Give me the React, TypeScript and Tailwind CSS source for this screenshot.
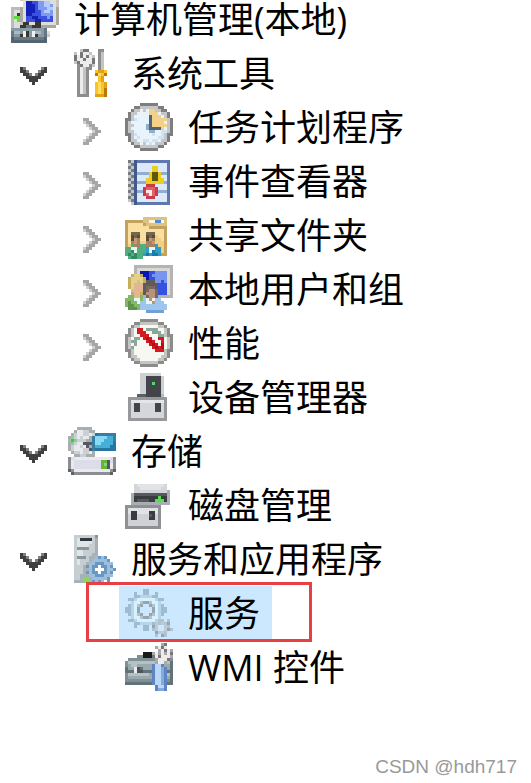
import React, { useState } from "react";

type Sprite = { colors: Record<string, string>; rows: string[] };

// 16x16 icons, one character per cell, "." is transparent
const sprites: Record<string, Sprite> = {
    computer: {
        colors: { m: "#c9c6c0", n: "#aaa79f", D: "#1420b8", B: "#3c50e0", b: "#7d9bf0", c: "#b4cbfb", g: "#b9bcb9", w: "#dcdedb", G: "#5fdc3c", k: "#3c3632", t: "#8a9ba8", s: "#657883", d: "#536570", l: "#a9bac4", W: "#eef2f4" },
        rows: [
            "...mmmmmmmmmmmmm",
            "...mwwwwwwwwwwwm",
            "....wDDBBbbccwwm",
            "....wDDDBbbccbwm",
            "gggnwDDDBbbbccwn",
            "gwwnwDDDBBbccbwn",
            "gwknwDDBBBbbbbwn",
            "gGGnwBBDDBBBbBwn",
            "gwGnwBBBDDBBBBwn",
            "gwwmkkwwkkwwwwwn",
            "gwwkksskkknnnnn.",
            "ttttttttttts....",
            "slltWktWlltsw...",
            "sttkWktWkttsm...",
            "dssssssssssd....",
            "dddddddddddd....",
        ],
    },
    tools: {
        colors: { g: "#8d8d8d", k: "#777777", l: "#c4c4c4", w: "#ececec", o: "#e0a312", y: "#f8c32b", d: "#b97805", Y: "#ffdc62" },
        rows: [
            "....lkk...gg....",
            "..l.kwwl..gl....",
            "..kwkwkwl.gl....",
            "..kwwkwwk.gl....",
            "..lkwwwwk.gl....",
            "...gkwwgl.gl....",
            "...gwlgg..gl....",
            "...gwlg..yooy...",
            "...gwlg..dYyd...",
            "...gwlg...yo....",
            "...gwlg...yo....",
            "...gwlg..yYyo...",
            "...gwlg..yYyo...",
            "...gwlg..yYyd...",
            "...gwlg..yYyd...",
            "...gggg..oood...",
        ],
    },
    clock: {
        colors: { g: "#7e7e7e", l: "#c4c6c8", w: "#e9f3fb", b: "#cfe3f5", o: "#f3d189", k: "#506473", c: "#8fb0cc" },
        rows: [
            ".....gggggg.....",
            "...ggllllllgg...",
            "..gllwlwoollgg..",
            ".gllwwwwooowllg.",
            ".glwwwwwkooowlg.",
            "gglbwwwwkooooolg",
            "glwwwwwwkoooowlg",
            "gllwwwwckooooolg",
            "glwwwwwckkkkowlg",
            "gllwwwwwccwwbblg",
            "gglbwwwwwbwwblgg",
            ".glwbwwwwwwbblg.",
            ".gllwwbbwbbwllg.",
            "..gllwlwbwlllg..",
            "...ggllllllgg...",
            ".....gggggg.....",
        ],
    },
    events: {
        colors: { g: "#777a80", s: "#c4c6c9", D: "#42598c", d: "#5f78ad", p: "#dbe9fb", b: "#92acd6", y: "#e8cf22", k: "#62560e", r: "#c93946", R: "#e0606a", w: "#ffe9e6" },
        rows: [
            "................",
            ".gsDddddddddddd.",
            ".sgDppppppppppd.",
            ".gsDpppppyypppd.",
            ".sgDpppppyypppd.",
            ".gsDbbbbykkybbd.",
            ".sgDppppykkyppd.",
            ".gsDpppyykkyypd.",
            ".sgDbbbyyyyyybd.",
            ".gsDppprrrppppd.",
            ".sgDpprRRRrpppd.",
            ".gsDbbrwwRrbbbd.",
            ".sgDpprRwRrpppd.",
            ".gsDppprrrppppd.",
            ".sgDppppppppppd.",
            "..sDddddddddddd.",
        ],
    },
    shared: {
        colors: { e: "#c3a15e", t: "#dcc283", y: "#fae0a0", o: "#f1cf85", w: "#fff6dc", b: "#4e8ed8", h: "#75654c", H: "#5a4c38", f: "#a8815e", F: "#c49a72", g: "#52ae80", G: "#2c8c62", c: "#2f9bc7", C: "#187aa8", W: "#e8f6f0" },
        rows: [
            "................",
            "................",
            "......tttttttt..",
            "eeeeeettwwbbwt..",
            "eyyyyyettttttt..",
            "eyyyyyyyeeeeee..",
            "eyyyyyyyyyyyye..",
            "eyhhhyyhhhyyye..",
            "eyHhHyyHhHoyye..",
            "eyHFfyyHFfooye..",
            "eyfFfooffFoooe..",
            "eogffggfffcooe..",
            "ggWWgggcWWccoe..",
            "ggGWgggcWCccoe..",
            "gGgGggcCcCCcee..",
            ".gGGgg..........",
        ],
    },
    users: {
        colors: { m: "#b5b3b3", w: "#d9d8d5", D: "#0718b2", B: "#3451df", b: "#7795ef", c: "#9dc6ee", C: "#6f9fd4", h: "#c8ad5e", H: "#e1d388", f: "#e0b693", k: "#7b675c", K: "#5f5a5c", F: "#b9937a", g: "#83b86b", G: "#5d9447", W: "#e9f5f0" },
        rows: [
            "...mmmmmmmmmmmmm",
            "...mwwwwwwwwwwwm",
            "...mwDDDBBbbbbwm",
            "..hHHhDDBbbbbbwm",
            ".hHHHHhDBBbbbbwm",
            ".hHHfHhKKKbbBbwm",
            ".hHfffKKKKKBBBwm",
            ".hHfffKkkkKBBBwm",
            "..ffffKkFFkBBBwm",
            "..hffhKFFFkBBBwm",
            ".ggffgmkFFkmmmmm",
            "gggWWgcWFWcc....",
            "gGggWccWWFccc...",
            "gGGggccccccccc..",
            ".GGGgccccccccc..",
            ".......CCCCCC...",
        ],
    },
    performance: {
        colors: { g: "#8c8c8b", l: "#c5c5c3", w: "#f8f8f2", t: "#8ba79a", r: "#d51a22", R: "#b70d17" },
        rows: [
            ".....gggggg.....",
            "...ggllllllgg...",
            "..gllwwwwwwllg..",
            ".glwrrwttttwwlg.",
            ".glwrrrwwtttwlg.",
            "gglwwrrrwwwttlgg",
            "glwttwrRrwwrrwlg",
            "glttwwwrRrwwrwlg",
            "glwtwwwwrRrwRwlg",
            "gltwwwwwwrRrRwlg",
            "gglwwwwwwwrrrlgg",
            ".glwwwwwwwwwwlg.",
            ".gllwwwwwwwwllg.",
            "..gllwwwwwwllg..",
            "...ggllllllgg...",
            ".....gggggg.....",
        ],
    },
    device: {
        colors: { m: "#ced1d4", k: "#42454a", K: "#5b5e63", G: "#54d968", g: "#96989c", w: "#d4d6db", W: "#e5e6ea", l: "#b7b9bd" },
        rows: [
            ".....mmmmmmm....",
            ".....mmkkkkkm...",
            ".....mmkkkkkm...",
            ".....mmkkGkkm...",
            ".....mmkkkkkm...",
            ".....mmkkkkkm...",
            ".....mmkkkkkm...",
            "....KKKkkkkkl...",
            ".ggggggggggggg..",
            ".gWWWWWWWWWWWg..",
            ".gwkkwwwwwkkwg..",
            ".gwkkwwwwwkkwg..",
            ".gwkkwwwwwkkwg..",
            ".gwwwwwwwwwwwg..",
            ".gwwwwwwwwwwwg..",
            ".ggggggggggggg..",
        ],
    },
    storage: {
        colors: { g: "#aaadb0", l: "#ccd0d2", w: "#e8ebed", k: "#555a60", c: "#8ccda0", G: "#63b830", b: "#347fa3", a: "#8bd9f4", B: "#45afd8", n: "#2577a1", m: "#8c8e94", s: "#dddce9", K: "#606167" },
        rows: [
            "...ggggg........",
            "..gwwllgg.......",
            ".glwwllwlnbbbbbb",
            "gclwlwwgbaaaaBBb",
            "cGclllggbaaaBBBb",
            "gclwwkkkbaaBBBBn",
            "glwwlwkgbBBBBBnn",
            "glwwwllkbnnnnnnn",
            ".gllwllwg.......",
            "..ggllggg.......",
            "mswwwwwwwwwwwwsm",
            "mwsssssssssGGksm",
            "mwsssssssssGckwm",
            "mwsssssssssGGkwm",
            "KmwwwwwwwwwwwwmK",
            ".KmmmmmmmmmmmmK.",
        ],
    },
    disk: {
        colors: { l: "#d3d5d9", w: "#e1e3e6", k: "#393c40", K: "#56595e", G: "#55e04d", g: "#8e9094", W: "#e1e2e6", s: "#cfd1d6", m: "#aaadb1" },
        rows: [
            "................",
            "...lwwwwwwwwwl..",
            "...llwwwwwwwll..",
            "...lllllllllllm.",
            "..mKKKKKKKKKKKm.",
            "..mkkkkkkkkGkkm.",
            "..mkKKKKkkGGGkm.",
            "..mmmmmmmmmmmmm.",
            "gggggggggggg....",
            "gWWWWWWWWWWg....",
            "gWkkWWWWkkWg....",
            "gskkssssKksg....",
            "gskksssskksg....",
            "gssssssssssg....",
            "gssssssssssg....",
            "gggggggggggg....",
        ],
    },
    server: {
        colors: { l: "#c6ced2", w: "#e0e6e8", k: "#303a40", d: "#89969d", m: "#a6b2b8", b: "#6997c2", c: "#9dbfdd", W: "#ffffff", G: "#83dc59" },
        rows: [
            "..llllllld......",
            "..lwkkkklm......",
            "..lwwwwwlm......",
            "..lwwwwllm......",
            "..lddddllm......",
            "..lwwllllm......",
            "..lwwlllmm......",
            "..ldddlmmcbcb...",
            "..lwlllmcccccb..",
            "..lwllmccbbbccc.",
            "..lllmbcbbWbbcb.",
            "..lllmmcbWWWbccb",
            "..lllmbcbbWbbcb.",
            "..llmmmccbbbccc.",
            "..llmGGmcccccb..",
            "..mmmGGmbcbc.b..",
        ],
    },
    gears: {
        colors: { c: "#9fbbd0", l: "#b4d6eb", w: "#d9f1fc", g: "#96a5b0", s: "#b0c3d0", S: "#bccbd6" },
        rows: [
            "......cc........",
            "...c..cc..c.....",
            "...ccllllcc.....",
            ".cclwwwwwwlcc...",
            "..lwwsggswwl....",
            ".clwsg..gswlc...",
            "cclwg....gwlcc..",
            "cclwg....gwlcc..",
            ".clwsg..gswlc...",
            "..lwwsggswwl....",
            ".cclwwwwwwlss.s.",
            "...ccllllcSsSsg.",
            "...c..cc.gS..Ss.",
            "......cc.sS..Sgs",
            "..........gSSs..",
            "..........s.gs..",
        ],
    },
    toolbox: {
        colors: { k: "#17191a", g: "#9aa9ae", l: "#b6c1c5", t: "#7f9096", d: "#617279", D: "#4a555a", w: "#ececec", m: "#a9a9a9", n: "#777777", b: "#5c86c3", c: "#bcd7f6", C: "#82abdf" },
        rows: [
            "............mn..",
            "..........mwnw..",
            "...........mwnwm",
            "......kkkmwmwmwn",
            "....ttkkknwnwwwm",
            ".tttttttttmwwwnt",
            "tlllllllllmwwmld",
            "tgllgggggbccbggd",
            "dggwDdgggbccCbgd",
            "dddwDDdddbccCbdd",
            "tlllllllgbccCbld",
            "tggggggggbccCbgd",
            "tttttttttbccCbtd",
            "dddddddddbccCbdd",
            "..........bccb..",
            "..........bCCb..",
        ],
    },
    open: {
        colors: { k: "#404040", b: "#808080" },
        rows: [
            "", "", "", "", "", "",
            "...kb.....bk....",
            "...kkb...bkk....",
            "....kkb.bkk.....",
            ".....kkkkk......",
            "......kkk.......",
            ".......k........",
        ],
    },
    closed: {
        colors: { k: "#a6a6a6", b: "#cfcfcf" },
        rows: [
            "", "", "", "", "",
            ".....kk.........",
            ".....bkk........",
            "......bkk.......",
            ".......bkk......",
            "........bkk.....",
            ".......bkk......",
            "......bkk.......",
            ".....bkk........",
            ".....kk.........",
        ],
    },
};

type Node = {
    label: string;
    icon: string;
    closed?: boolean;
    selected?: boolean;
    children?: Node[];
};

const tree: Node[] = [
    {
        label: "系统工具",
        icon: "tools",
        children: [
            { label: "任务计划程序", icon: "clock", closed: true },
            { label: "事件查看器", icon: "events", closed: true },
            { label: "共享文件夹", icon: "shared", closed: true },
            { label: "本地用户和组", icon: "users", closed: true },
            { label: "性能", icon: "performance", closed: true },
            { label: "设备管理器", icon: "device" },
        ],
    },
    {
        label: "存储",
        icon: "storage",
        children: [{ label: "磁盘管理", icon: "disk" }],
    },
    {
        label: "服务和应用程序",
        icon: "server",
        children: [
            { label: "服务", icon: "gears", selected: true },
            { label: "WMI 控件", icon: "toolbox" },
        ],
    },
];

function PixelIcon({ name }: { name: string }) {
    const { colors, rows } = sprites[name];
    return (
        <svg
            viewBox="0 0 16 16"
            shapeRendering="crispEdges"
            className="size-12 shrink-0"
            aria-hidden="true"
        >
            {rows.map((row, y) =>
                row
                    .split("")
                    .map((c, x) =>
                        colors[c] ? (
                            <rect
                                key={`${x}-${y}`}
                                x={x}
                                y={y}
                                width="1"
                                height="1"
                                fill={colors[c]}
                            />
                        ) : null,
                    ),
            )}
        </svg>
    );
}

function TreeItem({ node }: { node: Node }) {
    const [open, setOpen] = useState(!node.closed);
    const expandable = node.closed || !!node.children;

    return (
        <li>
            <div className="relative flex h-[54px] items-center">
                <div className="w-[51px] shrink-0">
                    {expandable && (
                        <button
                            type="button"
                            aria-label={node.label}
                            aria-expanded={open}
                            onClick={() => setOpen(!open)}
                            className="block cursor-pointer"
                        >
                            <PixelIcon name={open ? "open" : "closed"} />
                        </button>
                    )}
                </div>
                <div
                    className={`flex h-full items-center gap-[15px] pl-1.5 pr-3 ${node.selected ? "bg-[#cce8ff]" : ""}`}
                >
                    <PixelIcon name={node.icon} />
                    <span className="pt-0.5">{node.label}</span>
                </div>
                {node.selected && (
                    <div className="pointer-events-none absolute -top-1 left-[18px] h-[60px] w-[226px] border-3 border-[#e64045]" />
                )}
            </div>
            {open && node.children && (
                <ul className="pl-[57px]">
                    {node.children.map((child) => (
                        <TreeItem key={child.label} node={child} />
                    ))}
                </ul>
            )}
        </li>
    );
}

export default function App() {
    return (
        <div className="flex min-h-screen flex-col bg-white font-['Open_Sans','Noto_Sans_CJK_SC',sans-serif] text-black">
            <nav className="pl-[11px] text-[36px] leading-10 whitespace-nowrap">
                {/* Root row, its icon runs past the top edge */}
                <div className="flex h-[46px] items-end gap-[15px] pb-[3px]">
                    <PixelIcon name="computer" />
                    <span className="self-start">计算机管理(本地)</span>
                </div>
                <ul>
                    {tree.map((node) => (
                        <TreeItem key={node.label} node={node} />
                    ))}
                </ul>
            </nav>

            <footer className="mt-auto pr-3.5 pb-1 text-right font-['Liberation_Sans',Arial,sans-serif] text-[19px] leading-6 text-[#999999]">
                CSDN @hdh717
            </footer>
        </div>
    );
}
